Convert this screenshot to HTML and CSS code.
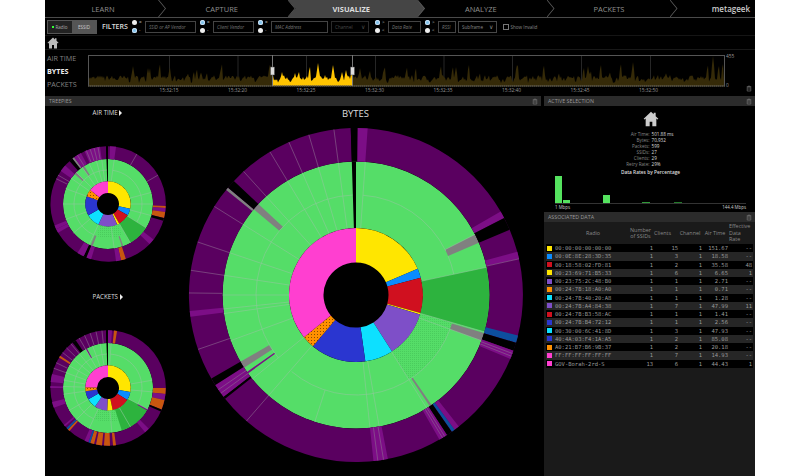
FILE: index.html
```html
<!DOCTYPE html>
<html lang="en">
<head>
<meta charset="utf-8">
<title>Eye P.A. Visualize</title>
<link rel="stylesheet" href="styles.css">
</head>
<body>
<svg class="defs" width="0" height="0" aria-hidden="true">
  <defs>
    <symbol id="trash" viewBox="0 0 8 8"><path d="M1 1.5h6M3 1.5V.7h2v.8M1.6 2.2h4.8v5.2H1.6z" fill="none" stroke="currentColor" stroke-width=".8"/><path d="M2.6 3.2v3.2M4 3.2v3.2M5.4 3.2v3.2" stroke="currentColor" stroke-width=".5"/></symbol>
    <symbol id="home" viewBox="0 0 24 24"><path d="M12 1 1 11.5l1.4 1.4L4 11.4V23h6v-7h4v7h6V11.4l1.6 1.5 1.4-1.4-4-3.8V2.5h-3v2.4z" fill="currentColor"/></symbol>
    <pattern id="dots-green" width="2" height="2" patternUnits="userSpaceOnUse"><rect width="2" height="2" fill="#55dd68"/><rect width="1" height="1" fill="#4acc5d"/></pattern>
    <pattern id="dots-orange" width="3" height="3" patternUnits="userSpaceOnUse"><rect width="3" height="3" fill="#ff9000"/><rect width="1" height="1" fill="#8a4b00"/></pattern>
  </defs>
</svg>
<main class="app">
  <nav class="nav">
    <a class="step step-first">LEARN</a>
    <a class="step">CAPTURE</a>
    <a class="step step-active">VISUALIZE</a>
    <a class="step">ANALYZE</a>
    <a class="step step-last">PACKETS</a>
    <span class="logo">metageek</span>
  </nav>

  <section class="toolbar">
    <div class="toggle"><span class="toggle-opt"><i class="led"></i>Radio</span><span class="toggle-opt toggle-on">ESSID</span></div>
    <strong class="filters">FILTERS</strong>
    <div class="radios"><span class="rd"><i class="dot"></i>=</span><span class="rd"><i class="dot dot-on"></i>-</span></div>
    <span class="field w-ssid">SSID or AP Vendor</span>
    <div class="radios"><span class="rd"><i class="dot dot-on"></i>=</span><span class="rd"><i class="dot"></i>-</span></div>
    <span class="field w-client">Client Vendor</span>
    <div class="radios"><span class="rd"><i class="dot dot-on"></i>=</span><span class="rd"><i class="dot"></i>-</span></div>
    <span class="field w-mac">MAC Address</span>
    <span class="field w-channel select">Channel<b>&#8744;</b></span>
    <div class="radios"><span class="rd"><i class="dot dot-on"></i>&gt;</span><span class="rd"><i class="dot"></i>&lt;</span></div>
    <span class="field w-rate">Data Rate</span>
    <div class="radios"><span class="rd"><i class="dot dot-on"></i>&gt;</span><span class="rd"><i class="dot"></i>&lt;</span></div>
    <span class="field w-rssi">RSSI</span>
    <span class="field w-sub select plain">Subframe<b>&#8744;</b></span>
    <label class="check"><i class="box"></i>Show Invalid</label>
  </section>

  <div class="crumb"><svg class="home-small"><use href="#home"/></svg></div>

  <section class="timeline">
    <div class="metrics">
      <span>AIR TIME</span>
      <span class="metric-on">BYTES</span>
      <span>PACKETS</span>
    </div>
    <div class="plot">
      <svg id="chart" class="chart" width="637" height="32" viewBox="0 0 637 32"></svg>
      <div class="ticks">
        <span>15:32:15</span><span>15:32:20</span><span>15:32:25</span><span>15:32:30</span>
        <span>15:32:35</span><span>15:32:40</span><span>15:32:45</span><span>15:32:50</span>
      </div>
    </div>
    <div class="scale">
      <span>455</span><span>0</span>
      <svg class="trash trash-scale"><use href="#trash"/></svg>
    </div>
  </section>

  <div class="panels">
    <section class="panel panel-left">
      <header class="panel-head">TREEPIES<svg class="trash"><use href="#trash"/></svg></header>
      <div class="pies">
        <div class="pies-side">
          <div class="mini">
            <h3 class="pie-title">AIR TIME <i class="arrow"></i></h3>
            <svg id="pie-air" class="pie-small" width="124" height="124" viewBox="-62 -62 124 124"></svg>
          </div>
          <div class="mini">
            <h3 class="pie-title">PACKETS <i class="arrow"></i></h3>
            <svg id="pie-packets" class="pie-small" width="124" height="124" viewBox="-62 -62 124 124"></svg>
          </div>
        </div>
        <div class="pie-main">
          <h2 class="pie-heading">BYTES</h2>
          <svg id="pie-bytes" class="pie-big" width="340" height="340" viewBox="-170 -170 340 340"></svg>
        </div>
      </div>
    </section>

    <div class="side">
      <section class="panel panel-active">
        <header class="panel-head">ACTIVE SELECTION<svg class="trash"><use href="#trash"/></svg></header>
        <div class="active">
          <svg class="home-big"><use href="#home"/></svg>
          <dl class="stats">
            <dt>Air Time:</dt><dd>501.88 ms</dd>
            <dt>Bytes:</dt><dd>70,932</dd>
            <dt>Packets:</dt><dd>599</dd>
            <dt>SSIDs:</dt><dd>27</dd>
            <dt>Clients:</dt><dd>29</dd>
            <dt>Retry Rate:</dt><dd>29%</dd>
          </dl>
          <h4 class="rates-title">Data Rates by Percentage</h4>
          <div class="bars">
            <i class="bar b1"></i><i class="bar b2"></i><i class="bar b3"></i><i class="bar b4"></i><i class="bar b5"></i>
          </div>
          <div class="bars-axis"><span>1 Mbps</span><span>144.4 Mbps</span></div>
        </div>
      </section>

      <section class="panel panel-assoc">
        <header class="panel-head">ASSOCIATED DATA<svg class="trash"><use href="#trash"/></svg></header>
        <div class="assoc">
          <div class="tr th">
            <span class="c-radio">Radio</span><span class="c-n">Number of SSIDs</span><span class="c-n c-clients">Clients</span><span class="c-n">Channel</span><span class="c-n">Air Time</span><span class="c-e">Effective Data Rate</span>
          </div>
          <div class="tr"><span class="c-radio"><i class="sw s-yellow"></i>00:00:00:00:00:00</span><span class="c-n">1</span><span class="c-n">15</span><span class="c-n">1</span><span class="c-n">151.67</span><span class="c-e">--</span></div>
          <div class="tr alt"><span class="c-radio"><i class="sw s-blue"></i>00:0E:8E:28:3D:35</span><span class="c-n">1</span><span class="c-n">3</span><span class="c-n">1</span><span class="c-n">18.58</span><span class="c-e">--</span></div>
          <div class="tr"><span class="c-radio"><i class="sw s-red"></i>00:18:58:02:FD:81</span><span class="c-n">1</span><span class="c-n">2</span><span class="c-n">1</span><span class="c-n">35.58</span><span class="c-e">48</span></div>
          <div class="tr alt"><span class="c-radio"><i class="sw s-yellow"></i>00:23:69:71:B5:33</span><span class="c-n">1</span><span class="c-n">6</span><span class="c-n">1</span><span class="c-n">6.65</span><span class="c-e">1</span></div>
          <div class="tr"><span class="c-radio"><i class="sw s-violet"></i>00:23:75:2C:48:B0</span><span class="c-n">1</span><span class="c-n">1</span><span class="c-n">1</span><span class="c-n">2.71</span><span class="c-e">--</span></div>
          <div class="tr alt"><span class="c-radio"><i class="sw s-orange"></i>00:24:7B:18:A0:A0</span><span class="c-n">1</span><span class="c-n">1</span><span class="c-n">1</span><span class="c-n">0.71</span><span class="c-e">--</span></div>
          <div class="tr"><span class="c-radio"><i class="sw s-cyan"></i>00:24:7B:40:20:A8</span><span class="c-n">1</span><span class="c-n">1</span><span class="c-n">1</span><span class="c-n">1.28</span><span class="c-e">--</span></div>
          <div class="tr alt"><span class="c-radio"><i class="sw s-violet"></i>00:24:7B:A4:84:38</span><span class="c-n">1</span><span class="c-n">7</span><span class="c-n">1</span><span class="c-n">47.99</span><span class="c-e">11</span></div>
          <div class="tr"><span class="c-radio"><i class="sw s-red"></i>00:24:7B:B3:58:AC</span><span class="c-n">1</span><span class="c-n">1</span><span class="c-n">1</span><span class="c-n">1.41</span><span class="c-e">--</span></div>
          <div class="tr alt"><span class="c-radio"><i class="sw s-royal"></i>00:24:7B:B4:72:12</span><span class="c-n">1</span><span class="c-n">1</span><span class="c-n">1</span><span class="c-n">2.56</span><span class="c-e">--</span></div>
          <div class="tr"><span class="c-radio"><i class="sw s-cyan"></i>00:30:00:6C:41:8D</span><span class="c-n">1</span><span class="c-n">3</span><span class="c-n">1</span><span class="c-n">47.93</span><span class="c-e">--</span></div>
          <div class="tr alt"><span class="c-radio"><i class="sw s-royal"></i>40:4A:03:F4:1A:A5</span><span class="c-n">1</span><span class="c-n">2</span><span class="c-n">1</span><span class="c-n">85.08</span><span class="c-e">--</span></div>
          <div class="tr"><span class="c-radio"><i class="sw s-orange"></i>A0:21:B7:B6:9B:37</span><span class="c-n">1</span><span class="c-n">2</span><span class="c-n">1</span><span class="c-n">20.18</span><span class="c-e">--</span></div>
          <div class="tr alt"><span class="c-radio"><i class="sw s-pink"></i>FF:FF:FF:FF:FF:FF</span><span class="c-n">1</span><span class="c-n">7</span><span class="c-n">1</span><span class="c-n">14.93</span><span class="c-e">--</span></div>
          <div class="tr"><span class="c-radio"><i class="sw s-pink"></i>GOV-Borah-2rd-S</span><span class="c-n">13</span><span class="c-n">6</span><span class="c-n">1</span><span class="c-n">44.43</span><span class="c-e">1</span></div>
        </div>
      </section>
    </div>
  </div>
</main>
<script src="script.js"></script>
</body>
</html>
```
FILE: styles.css
```css
* { box-sizing: border-box; }
html, body { margin: 0; height: 100%; background: #fff; }
body { font-family: "Open Sans", "Liberation Sans", sans-serif; overflow: hidden; }
.defs { position: absolute; }
.app { width: 710px; height: 476px; margin: 0 auto; background: #000; color: #aaa; display: flex; flex-direction: column; overflow: hidden; }

/* nav */
.nav { display: flex; height: 18px; border-bottom: 1px solid #4a4a4a; font-size: 7.5px; flex: none; }
.step { position: relative; isolation: isolate; width: 129.5px; padding-right: 2px; display: flex; align-items: center; justify-content: center; color: #8f8f8f; }
.step-first { width: 113px; padding: 0 0 0 3px; }
.step-last { width: 123px; padding: 0 0 0 2px; }
.step::after { content: ""; position: absolute; top: 0; bottom: 0; right: -8px; width: 8px; background: #5c5c5c; clip-path: polygon(0 0, 1px 0, 8px 50%, 1px 100%, 0 100%, 7px 50%); z-index: 2; }
.step-active { color: #ddd; font-weight: 700; }
.step-active::before { content: ""; position: absolute; top: 0; bottom: 0; left: 0; right: -8px; z-index: -1; background: #454545; clip-path: polygon(0 0, calc(100% - 8px) 0, 100% 50%, calc(100% - 8px) 100%, 0 100%, 8px 50%); }
.logo { flex: 1; display: flex; align-items: center; justify-content: flex-end; padding-right: 5px; color: #ccc; font-size: 8px; font-weight: 600; }

/* toolbar */
.toolbar { display: flex; align-items: center; height: 18px; flex: none; padding-left: 2px; color: #777; font-size: 4.6px; border-bottom: 1px solid #151515; }
.toggle { display: flex; width: 50px; height: 14px; border: 1px solid #555; background: #222; flex: none; }
.toggle-opt { flex: 1; display: flex; align-items: center; justify-content: center; gap: 1px; color: #aaa; }
.toggle-on { background: #555; color: #ccc; }
.led { width: 2px; height: 2px; background: #3f3; }
.filters { font-size: 7px; font-weight: 600; color: #ddd; margin: 0 4px 0 5px; width: 25px; white-space: nowrap; flex: none; }
.radios { display: flex; flex-direction: column; gap: 3px; width: 14px; padding-left: 1px; color: #aaa; flex: none; }
.rd { display: flex; align-items: center; gap: 2px; height: 5px; line-height: 5px; }
.dot { width: 5px; height: 5px; border-radius: 50%; background: #eee; flex: none; }
.dot-on { background: #7ec4ee; box-shadow: inset 0 0 0 1px #cde; }
.field { display: flex; align-items: center; justify-content: space-between; height: 12px; border: 1px solid #444; padding: 0 3px; font-style: italic; color: #777; white-space: nowrap; flex: none; }
.field b { font-weight: 400; font-style: normal; font-size: 5.5px; }
.select { font-style: normal; color: #4a4a4a; border-color: #2a2a2a; }
.plain { color: #888; border-color: #484848; }
.w-ssid { width: 51px; margin-right: 3px; }
.w-client { width: 41px; margin-right: 3px; }
.w-mac { width: 57px; margin-right: 3px; }
.w-channel { width: 38px; margin-right: 5px; }
.w-rate { width: 33px; margin-right: 3px; }
.w-rssi { width: 18px; margin-right: 2px; }
.w-sub { width: 39px; margin-right: 6px; }
.check { display: flex; align-items: center; gap: 1.5px; color: #888; white-space: nowrap; }
.box { width: 6px; height: 6px; border: 1px solid #777; }

/* crumb */
.crumb { height: 14px; flex: none; padding: 1px 0 0 2px; border-bottom: 1px solid #181818; }
.home-small { width: 12px; height: 12px; color: #bbb; display: block; }

/* timeline */
.timeline { position: relative; display: flex; height: 46px; flex: none; padding-top: 5px; }
.metrics { width: 43px; margin-top: -2px; padding-left: 2px; display: flex; flex-direction: column; gap: 3px; font-size: 7.2px; line-height: 10.2px; color: #808080; }
.metric-on { color: #eee; font-weight: 700; }
.plot { width: 637px; flex: none; }
.chart { display: block; }
.ticks { display: flex; padding-left: 46.75px; font-size: 4.8px; line-height: 7px; color: #999; }
.ticks span { width: 68.5px; text-align: center; }
.scale { flex: 1; position: relative; display: flex; flex-direction: column; justify-content: space-between; height: 35px; margin-top: -2px; padding-left: 1px; font-size: 4.8px; line-height: 6px; color: #999; }
.trash { width: 6px; height: 7px; color: #777; display: block; flex: none; }
.trash-scale { position: absolute; right: 3px; bottom: -4px; }
.chart .frame { fill: none; stroke: #555; stroke-width: 1; }
.chart .grid { stroke: #262626; stroke-width: 1; }
.chart .dim { fill: #352a08; }
.chart .lit { fill: #ffc400; }
.chart .base { stroke: #7a6420; stroke-width: 1; stroke-dasharray: 1 1; }
.chart .sel { stroke: #777; stroke-width: 1; }
.chart .grip { fill: #ddd; stroke: #444; stroke-width: .5; }

/* panels */
.panels { flex: 1; min-height: 0; display: flex; gap: 3px; }
.panel { display: flex; flex-direction: column; min-height: 0; }
.panel-left { width: 496px; flex: none; }
.panel-head { height: 10px; flex: none; display: flex; align-items: center; justify-content: space-between; padding: 0 3px 0 4px; background: #2b2b2b; color: #999; font-size: 5.3px; }
.pies { flex: 1; min-height: 0; display: flex; }
.pies-side { width: 125px; flex: none; padding-top: 1px; }
.mini { height: 184px; display: flex; flex-direction: column; align-items: center; }
.pie-title { margin: 0 0 23px; height: 12px; font-size: 6.2px; line-height: 12px; font-weight: 400; color: #ddd; white-space: nowrap; }
.arrow { display: inline-block; border-left: 3px solid #eee; border-top: 3px solid transparent; border-bottom: 3px solid transparent; vertical-align: -1px; }
.pie-small, .pie-big { display: block; flex: none; overflow: visible; }
.pie-main { flex: 1; display: flex; flex-direction: column; align-items: center; }
.pie-heading { margin: 2px 0 0; height: 17px; font-size: 9.5px; line-height: 12px; font-weight: 400; color: #ddd; }

/* sunburst fills */
.seg { stroke: none; }
.f-yellow { fill: #ffe600; } .f-blue { fill: #0a8cff; } .f-red { fill: #d0101f; } .f-violet { fill: #7e4fc8; }
.f-cyan { fill: #0de0ff; } .f-royal { fill: #2a36d0; } .f-orange { fill: url(#dots-orange); } .f-pink { fill: #ff3fd0; }
.f-green { fill: #55dd68; } .f-dark { fill: #2db33e; } .f-stip { fill: url(#dots-green); }
.f-purple { fill: #5a0060; } .f-light { fill: #7c0e86; } .f-gray { fill: #808080; } .f-black { fill: #000; } .f-navy { fill: #0d4f9e; } .f-rust { fill: #c8560f; }
.div-green { stroke: #8fc79a; stroke-width: .6; fill: none; }
.div-purple { stroke: #8d6a90; stroke-width: .6; fill: none; }

/* right side */
.side { flex: 1; min-width: 0; display: flex; flex-direction: column; }
.panel-active { height: 116px; flex: none; }
.active { flex: 1; display: flex; flex-direction: column; align-items: center; padding: 5px 9px 0 11px; }
.home-big { width: 16px; height: 16px; color: #ccc; display: block; flex: none; }
.stats { margin: 4px 0 0; display: grid; grid-template-columns: 1fr 1fr; column-gap: 2px; width: 100%; font-size: 4.6px; line-height: 6.1px; }
.stats dt { text-align: right; color: #888; }
.stats dd { margin: 0; color: #ddd; }
.rates-title { margin: 1px 0 0; font-size: 4.8px; line-height: 7px; color: #ddd; font-weight: 600; }
.bars { width: 100%; height: 28px; flex: none; border-bottom: 1px solid #333; display: flex; align-items: flex-end; }
.bar { background: #55e35f; width: 7px; flex: none; }
.b1 { height: 27px; }
.b2 { height: 3px; margin-left: 1px; }
.b3 { height: 8px; margin-left: 33px; }
.b4 { height: 1px; margin-left: 32px; width: 8px; background: #2f9a38; }
.b5 { height: 1px; margin-left: 24px; width: 8px; background: #237a2a; }
.bars-axis { width: 100%; margin-top: 1px; display: flex; justify-content: space-between; font-size: 4.4px; line-height: 5px; color: #ccc; }
.panel-assoc { flex: 1; }
.assoc { flex: 1; background: #1a1a1a; padding: 0 2px; font-size: 5.5px; color: #999; }
.tr { display: grid; grid-template-columns: 82px 25px 25px 24px 26px 1fr; align-items: center; height: 8.26px; background: #000; font-family: "DejaVu Sans Mono", "Liberation Mono", monospace; }
.tr.alt { background: #262626; }
.tr.th { height: 22px; background: #1a1a1a; font-family: "Open Sans", sans-serif; text-align: center; line-height: 6.4px; color: #888; font-size: 5.4px; }
.c-radio { display: flex; align-items: center; white-space: nowrap; }
.th .c-radio { display: block; padding-left: 12px; }
.sw { width: 5px; height: 5px; margin: 0 3px 0 1px; flex: none; }
.s-yellow { background: #ffe600; } .s-blue { background: #0a8cff; } .s-red { background: #d0101f; } .s-violet { background: #7e4fc8; }
.s-orange { background: #ff9000; } .s-cyan { background: #0de0ff; } .s-royal { background: #2a36d0; } .s-pink { background: #ff3fd0; }
.c-n { text-align: right; }
.th .c-n { text-align: center; }
.th .c-clients { padding-right: 6px; }
.c-e { text-align: right; padding-right: 1px; }
.th .c-e { text-align: left; padding: 0 0 0 1px; }
```
FILE: script.js
```js
// Draws the three sunbursts and the timeline from data (angles in degrees, clockwise from 12 o'clock).
var NS = "http://www.w3.org/2000/svg";

function pt(r, a) {
  var t = (a - 90) * Math.PI / 180;
  return (r * Math.cos(t)).toFixed(2) + " " + (r * Math.sin(t)).toFixed(2);
}
function add(svg, name, attrs) {
  var el = document.createElementNS(NS, name);
  for (var k in attrs) el.setAttribute(k, attrs[k]);
  svg.appendChild(el);
  return el;
}
function wedge(r0, r1, a0, a1) {
  var large = a1 - a0 > 180 ? 1 : 0;
  return "M" + pt(r1, a0) + "A" + r1 + " " + r1 + " 0 " + large + " 1 " + pt(r1, a1) +
         "L" + pt(r0, a1) + "A" + r0 + " " + r0 + " 0 " + large + " 0 " + pt(r0, a0) + "Z";
}
function arc(r, a0, a1) {
  var large = a1 - a0 > 180 ? 1 : 0;
  return "M" + pt(r, a0) + "A" + r + " " + r + " 0 " + large + " 1 " + pt(r, a1);
}

function sunburst(id, p) {
  var svg = document.getElementById(id), R = p.radii;
  function ring(list, r0, r1) {
    list.forEach(function (s) {
      add(svg, "path", { d: wedge(r0, r1, s[0], s[1]), "class": "seg f-" + s[2] });
    });
  }
  add(svg, "circle", { r: R[3], "class": "f-green" });
  add(svg, "circle", { r: R[1], "class": "f-black" });
  ring(p.core, R[0], R[1]);
  ring(p.inner || [], R[1], R[2]);
  ring(p.mid || [], R[1], R[3]);
  ring(p.outerGreen || [], R[2], R[3]);
  ring(p.outer, R[3], R[4]);
  (p.greenLines || []).forEach(function (a) {
    add(svg, "path", { d: "M" + pt(a[1] || R[1], a[0]) + "L" + pt(a[2] || R[3], a[0]), "class": "div-green" });
  });
  (p.greenArcs || []).forEach(function (a) {
    add(svg, "path", { d: arc(R[2], a[0], a[1]), "class": "div-green" });
  });
  (p.purpleLines || []).forEach(function (a) {
    add(svg, "path", { d: "M" + pt(R[3], a) + "L" + pt(R[4], a), "class": "div-purple" });
  });
}

sunburst("pie-bytes", {
  radii: [32.5, 67, 100, 133.5, 167],
  core: [[0,67,"yellow"],[67,75,"blue"],[75,105.5,"red"],[105.5,107,"yellow"],[107,147.5,"violet"],[147.5,172,"cyan"],[172,220,"royal"],[220,231,"orange"],[231,360,"pink"]],
  mid: [[78,106,"dark"],[358.2,360,"black"]],
  inner: [[106,148,"stip"]],
  outerGreen: [[63,67,"gray"],[106.5,110,"gray"],[145.5,146.5,"gray"],[237,240,"gray"],[234,234.8,"light"],[310,313,"gray"]],
  outer: [
    [0,358.2,"purple"],[358.2,360.6,"black"],[0.6,4,"light"],[60,62.5,"light"],[62.5,67,"black"],[75,77.5,"light"],
    [104,106.6,"navy"],[106.6,109.5,"black"],[109.5,112.5,"light"],[142,143.8,"light"],[143.8,145,"navy"],[145,147,"black"],[147,150,"light"],
    [169,174,"light"],[231.6,232.5,"black"],[232.5,237.4,"light"],[237.4,240,"black"],[262.5,264.5,"light"],[309,310,"gray"],[310,313,"black"]
  ],
  greenLines: [[4],[63,100],[78],[106],[110],[148],[170],[174],[198,100],[221],[231],[250],[262],[264],[270],[278.5],[288.5],[302],[317.7],[329],[336.3],[343.6],[352.4]],
  greenArcs: [[4,64],[67,78],[110,220],[231,358]],
  purpleLines: [77.5,170.5,172.5,221,234,235.5,251,270.7,278.5,288.5,302,317.7,329,336.3,343.6,352.4,147.9,148.8,110.5,111.5]
});

var smallRadii = [11, 22.7, 34, 45, 57.7];

sunburst("pie-air", {
  radii: smallRadii,
  core: [[0,102,"yellow"],[102,120,"blue"],[120,150,"red"],[150,156,"yellow"],[156,205,"violet"],[205,240,"cyan"],[240,290,"royal"],[290,308,"orange"],[308,360,"pink"]],
  mid: [[122,150,"dark"],[358,360,"black"]],
  inner: [[155,200,"stip"]],
  outerGreen: [[160,162,"gray"],[200,203,"gray"],[312,315,"gray"],[325,328,"gray"]],
  outer: [
    [0,358,"purple"],[358,360,"black"],[2,8,"light"],[92,94,"rust"],[94,98,"light"],[98,104,"rust"],[104,107,"black"],[128,134,"light"],
    [162,167,"rust"],[167,172,"light"],[197,202,"light"],[202,205,"black"],[205,212,"light"],[240,244,"light"],[244,248,"light"],
    [305,312,"light"],[318,322,"black"],[322,324,"gray"],[324,332,"light"],[336,352,"light"]
  ],
  greenLines: [[8],[75],[90],[105],[122],[150],[172],[205],[230],[250],[270],[290],[305],[315],[325],[335],[345],[352]],
  greenArcs: [[8,122],[205,358]],
  purpleLines: [30,60,296,300,328,338,342,346,350]
});

sunburst("pie-packets", {
  radii: smallRadii,
  core: [[0,100,"yellow"],[100,122,"blue"],[122,168,"red"],[168,182,"yellow"],[182,215,"violet"],[215,240,"cyan"],[240,262,"royal"],[262,272,"orange"],[272,360,"pink"]],
  mid: [[118,162,"dark"],[358,360,"black"]],
  inner: [[162,205,"stip"]],
  outerGreen: [[118,120,"light"],[330,332,"light"]],
  outer: [
    [0,358,"purple"],[358,360,"black"],[0,4,"light"],[6,9,"rust"],[90,96,"rust"],[96,102,"light"],[102,112,"rust"],[112,114,"black"],
    [135,140,"light"],[172,175,"rust"],[178,184,"rust"],[186,192,"rust"],[194,198,"rust"],[198,200,"navy"],[200,204,"light"],
    [222,224,"rust"],[224,226,"navy"],[228,230,"light"],[250,256,"light"],[270,272,"light"],[276,284,"light"],[302,304,"rust"],[322,326,"black"]
  ],
  greenLines: [[4],[80],[95],[118],[150],[175],[205],[225],[240],[262],[272],[280],[290],[300],[310],[320],[330],[340],[350]],
  greenArcs: [[4,118],[205,358]],
  purpleLines: [290,296,308,314,320,330,336,342,348,354]
});

(function timeline() {
  var svg = document.getElementById("chart"), W = 637, H = 32, seed = 7;
  function rnd() { seed = (seed * 16807) % 2147483647; return seed / 2147483647; }
  var raw = [], heights = [], i;
  for (i = 0; i <= W + 2; i++) {
    var h = 3 + rnd() * 8;
    if (rnd() > 0.94) h = 12 + rnd() * 10;
    raw.push(h);
  }
  for (i = 0; i <= W; i++) heights.push(Math.max(raw[i], raw[i + 1] * 0.8, 3));
  [[194,14],[207,13],[215,9],[230,23],[237,11],[245,21],[254,14],[258,16],[60,18],[45,20],[272,18],[368,19],[625,30],[545,24],[500,20]].forEach(function (p) {
    heights[p[0]] = p[1]; heights[p[0] + 1] = p[1] * 0.7; heights[p[0] - 1] = p[1] * 0.7;
  });
  function area(x0, x1) {
    var d = "M" + x0 + " " + (H - 1);
    for (var x = x0; x <= x1; x++) d += "L" + x + " " + (H - 1 - heights[x]).toFixed(1);
    return d + "L" + x1 + " " + (H - 1) + "Z";
  }
  [81, 149.5, 218, 287, 355.5, 424, 493, 562].forEach(function (x) {
    add(svg, "line", { x1: x + .5, x2: x + .5, y1: 0, y2: H - 1, "class": "grid" });
  });
  add(svg, "path", { d: area(0, 184), "class": "dim" });
  add(svg, "path", { d: area(264, W - 1), "class": "dim" });
  add(svg, "path", { d: area(184, 264), "class": "lit" });
  add(svg, "line", { x1: 0, x2: W, y1: H - 1, y2: H - 1, "class": "base" });
  add(svg, "rect", { x: .5, y: .5, width: W - 1, height: H - 1.5, "class": "frame" });
  [184.5, 264.5].forEach(function (x) {
    add(svg, "line", { x1: x, x2: x, y1: 0, y2: H - 1, "class": "sel" });
    add(svg, "rect", { x: x - 2, y: 12, width: 4, height: 8, "class": "grip" });
  });
})();
```
